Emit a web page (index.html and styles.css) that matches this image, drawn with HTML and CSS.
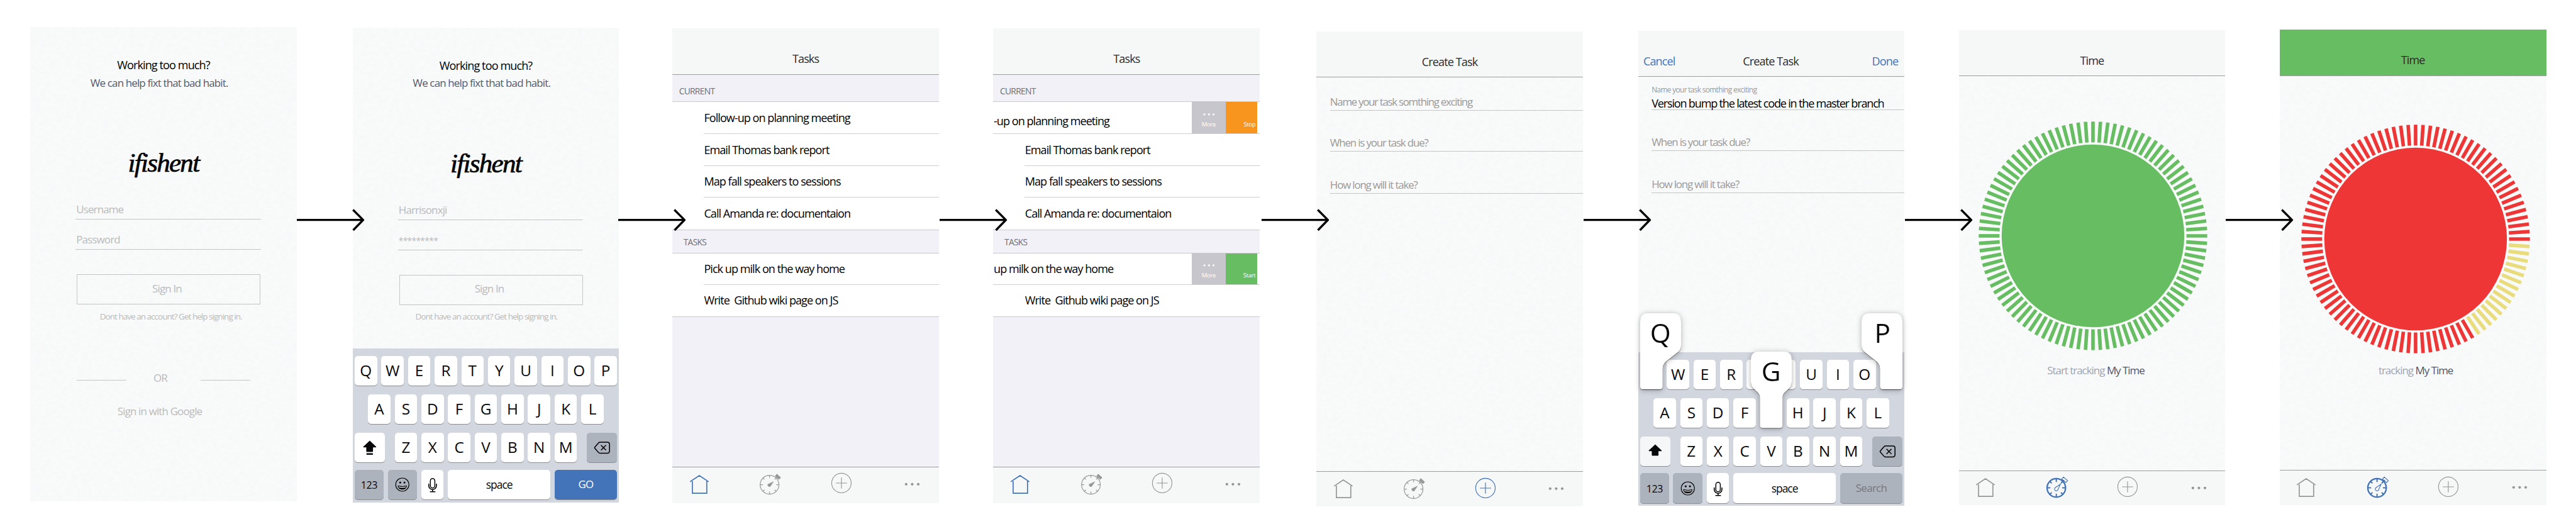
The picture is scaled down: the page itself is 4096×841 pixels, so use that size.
FILE: index.html
```html
<!DOCTYPE html>
<html lang="en">
<head>
<meta charset="utf-8">
<title>ifishent – screen flow</title>
<link rel="stylesheet" href="styles.css">
</head>
<body>
<svg class="defs" aria-hidden="true">
  <defs>
    <symbol id="arrow" viewBox="0 0 190 66"><path d="M0 33H184M158 4.500L186.500 33L158.500 62" fill="none" stroke="#000" stroke-width="6"/></symbol>
    <symbol id="home" viewBox="0 0 60 60"><path d="M4 27.500L30 10L56 27.500M10.500 26V60H51V26" fill="none" stroke="currentColor" stroke-width="3" transform="translate(0 -3)"/></symbol>
    <symbol id="clock" viewBox="0 0 72 72">
      <circle cx="33" cy="40" r="26.500" fill="none" stroke="currentColor" stroke-width="2"/>
      <path d="M33 14v7M33 59v7M7 40h7M52 40h7M14.600 21.600l4 4M47.400 54.400l4 4M14.600 58.400l4-4M47.400 25.600l6-6" stroke="currentColor" stroke-width="2" fill="none"/>
      <path d="M44 31.500L28 39a5 5 0 0 0 7 6Z" fill="currentColor" stroke="currentColor"/>
      <path d="M53.400 9.500L65 20L59.500 25.500L48.300 15.500Z" fill="currentColor"/>
    </symbol>
    <symbol id="clock-on" viewBox="0 0 72 72">
      <circle cx="33" cy="40" r="26" fill="none" stroke="currentColor" stroke-width="4"/>
      <path d="M33 15v7M33 58v7M8 40h7M51 40h7M15 22l4 4M47 54l4 4M15 58l4-4M47 26l7-7" stroke="currentColor" stroke-width="3.500" stroke-linecap="round" fill="none"/>
      <path d="M44.500 29.500L30 39.500a5 5 0 1 0 8 4.500Z" fill="none" stroke="currentColor" stroke-width="2"/>
      <path d="M53.400 9.500L65 20L59.500 25L48.300 15.500Z" fill="none" stroke="currentColor" stroke-width="2"/>
    </symbol>
    <symbol id="plus" viewBox="0 0 60 60"><circle cx="30" cy="30" r="27.500" fill="none" stroke="currentColor" stroke-width="2"/><path d="M30 14.500v31M14.500 30h31" stroke="currentColor" stroke-width="2"/></symbol>
    <symbol id="dots" viewBox="0 0 44 10"><circle cx="5" cy="5" r="3.800" fill="currentColor"/><circle cx="22" cy="5" r="3.800" fill="currentColor"/><circle cx="39" cy="5" r="3.800" fill="currentColor"/></symbol>
    <symbol id="shift" viewBox="0 0 84 84"><path d="M42.300 22.300L60.500 39.500Q61 41 59 41H51.500V52Q51.500 54 49.500 54H34.600Q32.600 54 32.600 52V41H25.500Q23.500 41 24 39.500Z" fill="#07080a"/></symbol>
    <symbol id="caps" viewBox="0 0 84 84"><use href="#shift"/><rect x="33" y="57.600" width="18.500" height="4.400" rx="1.500" fill="#07080a"/></symbol>
    <symbol id="delete" viewBox="0 0 84 84"><path d="M37 26.700H58Q64 26.700 64 32.700V51.500Q64 57.500 58 57.500H37Q34.500 57.500 33 55.500L22.500 43.500Q21.500 42 22.500 40.500L33 28.700Q34.500 26.700 37 26.700ZM40 35L54 49M54 35L40 49" fill="none" stroke="#000" stroke-width="2.700"/></symbol>
    <symbol id="smile" viewBox="0 0 84 84"><circle cx="42" cy="41.500" r="18.600" fill="none" stroke="#000" stroke-width="2"/><circle cx="36" cy="36" r="2.600"/><circle cx="48" cy="36" r="2.600"/><path d="M29 44Q42 48 55 44Q53.500 55.500 42 55.500Q30.500 55.500 29 44Z"/><path d="M31.500 46.500Q42 49.500 52.500 46.500L51.500 49Q42 51.500 32.500 49Z" fill="#fff"/></symbol>
    <symbol id="mic" viewBox="0 0 63 84"><rect x="25.300" y="24.500" width="12.600" height="26.500" rx="6.300" fill="none" stroke="#000" stroke-width="2.600"/><path d="M20.800 39V44.500A10.800 10.800 0 0 0 42.400 44.500V39M31.600 55.500V61M24 61.500H39.500" fill="none" stroke="#000" stroke-width="2.800"/></symbol>
    <g id="t1"><rect x="263" y="-5" width="58.500" height="10"/></g>
    <g id="t3"><use href="#t1"/><use href="#t1" transform="rotate(3.750)"/><use href="#t1" transform="rotate(7.500)"/></g>
    <g id="t9"><use href="#t3"/><use href="#t3" transform="rotate(11.250)"/><use href="#t3" transform="rotate(22.500)"/></g>
    <g id="done-ticks"><use href="#t9" transform="rotate(3.750)"/><use href="#t3" transform="rotate(37.500)"/><use href="#t3" transform="rotate(48.750)"/></g>
    <g id="main-ticks"><use href="#t9" transform="rotate(60)"/><use href="#t9" transform="rotate(93.750)"/><use href="#t9" transform="rotate(127.500)"/><use href="#t9" transform="rotate(161.250)"/><use href="#t9" transform="rotate(195)"/><use href="#t9" transform="rotate(228.750)"/><use href="#t9" transform="rotate(262.500)"/><use href="#t9" transform="rotate(296.250)"/><use href="#t9" transform="rotate(330)"/></g>
  </defs>
</svg>

<main class="board">
  <section class="phone phone-1 paper login">
    <h1 class="headline">Working too much?</h1>
    <p class="tagline">We can help fixt that bad habit.</p>
    <div class="logo">ifishent</div>
    <div class="field"><span>Username</span></div>
    <div class="field"><span>Password</span></div>
    <div class="button"><span>Sign In</span></div>
    <p class="help"><span>Dont have an account? Get help signing in.</span></p>
    <div class="divider"><i></i><span>OR</span><i></i></div>
    <p class="google"><span>Sign in with Google</span></p>
  </section>
  <svg class="arrow arrow-1"><use href="#arrow"/></svg>

  <section class="phone phone-2 paper login">
    <h1 class="headline">Working too much?</h1>
    <p class="tagline">We can help fixt that bad habit.</p>
    <div class="logo">ifishent</div>
    <div class="field"><span>Harrisonxji</span></div>
    <div class="field"><span class="stars">*********</span></div>
    <div class="button"><span>Sign In</span></div>
    <p class="help help-left"><span>Dont have an account? Get help signing in.</span></p>
    <div class="kb">
      <div class="keys"><b>Q</b><b>W</b><b>E</b><b>R</b><b>T</b><b>Y</b><b>U</b><b>I</b><b>O</b><b>P</b></div>
      <div class="keys"><b>A</b><b>S</b><b>D</b><b>F</b><b>G</b><b>H</b><b>J</b><b>K</b><b>L</b></div>
      <div class="keys"><b class="k-side k-left"><svg><use href="#caps"/></svg></b><b>Z</b><b>X</b><b>C</b><b>V</b><b>B</b><b>N</b><b>M</b><b class="k-side k-right k-dark"><svg><use href="#delete"/></svg></b></div>
      <div class="keys keys-last"><b class="k-num k-dark">123</b><b class="k-face k-dark"><svg><use href="#smile"/></svg></b><b class="k-mic"><svg><use href="#mic"/></svg></b><b class="k-space">space</b><b class="k-go">GO</b></div>
    </div>
  </section>
  <svg class="arrow arrow-2"><use href="#arrow"/></svg>

  <section class="phone phone-3 list">
    <header class="bar"><h2>Tasks</h2></header>
    <h3 class="group">CURRENT</h3>
    <ul>
      <li><span>Follow-up on planning meeting</span></li>
      <li><span>Email Thomas bank report</span></li>
      <li><span>Map fall speakers to sessions</span></li>
      <li><span>Call Amanda re: documentaion</span></li>
    </ul>
    <h3 class="group group-tasks">TASKS</h3>
    <ul>
      <li><span>Pick up milk on the way home</span></li>
      <li><span>Write&nbsp; Github wiki page on JS</span></li>
    </ul>
    <nav class="tabs"><svg class="i-home on"><use href="#home"/></svg><svg class="i-clock"><use href="#clock"/></svg><svg class="i-plus"><use href="#plus"/></svg><svg class="i-dots"><use href="#dots"/></svg></nav>
  </section>
  <svg class="arrow arrow-3"><use href="#arrow"/></svg>

  <section class="phone phone-4 list">
    <header class="bar"><h2>Tasks</h2></header>
    <h3 class="group">CURRENT</h3>
    <ul>
      <li class="swiped swiped-low"><span>-up on planning meeting</span><div class="more"><svg><use href="#dots"/></svg><em>More</em></div><div class="act stop"><em>Stop</em></div></li>
      <li><span>Email Thomas bank report</span></li>
      <li><span>Map fall speakers to sessions</span></li>
      <li><span>Call Amanda re: documentaion</span></li>
    </ul>
    <h3 class="group group-tasks">TASKS</h3>
    <ul>
      <li class="swiped"><span>up milk on the way home</span><div class="more"><svg><use href="#dots"/></svg><em>More</em></div><div class="act start"><em>Start</em></div></li>
      <li><span>Write&nbsp; Github wiki page on JS</span></li>
    </ul>
    <nav class="tabs"><svg class="i-home on"><use href="#home"/></svg><svg class="i-clock"><use href="#clock"/></svg><svg class="i-plus"><use href="#plus"/></svg><svg class="i-dots"><use href="#dots"/></svg></nav>
  </section>
  <svg class="arrow arrow-4"><use href="#arrow"/></svg>

  <section class="phone phone-5 paper">
    <header class="bar"><h2>Create Task</h2></header>
    <div class="entry entry-1"><span class="wide">Name your task somthing exciting</span></div>
    <div class="entry entry-2"><span>When is your task due?</span></div>
    <div class="entry entry-3"><span>How long will it take?</span></div>
    <nav class="tabs"><svg class="i-home"><use href="#home"/></svg><svg class="i-clock"><use href="#clock"/></svg><svg class="i-plus on"><use href="#plus"/></svg><svg class="i-dots"><use href="#dots"/></svg></nav>
  </section>
  <svg class="arrow arrow-5"><use href="#arrow"/></svg>

  <section class="phone phone-6 paper">
    <header class="bar bar-actions"><a>Cancel</a><h2>Create Task</h2><a>Done</a></header>
    <div class="entry entry-1 filled"><small>Name your task somthing exciting</small><strong>Version bump the latest code in the master branch</strong></div>
    <div class="entry entry-2"><span>When is your task due?</span></div>
    <div class="entry entry-3"><span>How long will it take?</span></div>
    <div class="kb">
      <div class="keys"><b></b><b>W</b><b>E</b><b>R</b><b></b><b></b><b>U</b><b>I</b><b>O</b><b></b></div>
      <div class="keys"><b>A</b><b>S</b><b>D</b><b>F</b><b></b><b>H</b><b>J</b><b>K</b><b>L</b></div>
      <div class="keys"><b class="k-side k-left k-pale"><svg><use href="#shift"/></svg></b><b>Z</b><b>X</b><b>C</b><b>V</b><b>B</b><b>N</b><b>M</b><b class="k-side k-right k-dark"><svg><use href="#delete"/></svg></b></div>
      <div class="keys keys-last"><b class="k-num k-dark">123</b><b class="k-face k-dark"><svg><use href="#smile"/></svg></b><b class="k-mic"><svg><use href="#mic"/></svg></b><b class="k-space">space</b><b class="k-go k-search">Search</b></div>
      <svg class="pop pop-q" viewBox="0 0 115 215"><path d="M22 0H92Q115 0 115 24V91Q115 100 110 106L71 137Q63 146 63 156V206Q63 214 55 214H8Q0 214 0 206V24Q0 0 22 0Z"/><text x="57" y="83.500">Q</text></svg>
      <svg class="pop pop-g" viewBox="0 0 115 215"><path d="M22 0H93Q115 0 115 24V84Q115 95 109 102L95 115Q89 121 89 130V207Q89 215 81 215H33.500Q25.500 215 25.500 207V130Q25.500 121 19.500 115L6 102Q0 95 0 84V24Q0 0 22 0Z"/><text x="57" y="83.500">G</text></svg>
      <svg class="pop pop-p" viewBox="0 0 115 215"><path d="M93 0H23Q0 0 0 24V91Q0 100 5 106L44 137Q52 146 52 156V206Q52 214 60 214H107Q115 214 115 206V24Q115 0 93 0Z"/><text x="59" y="83.500">P</text></svg>
    </div>
  </section>
  <svg class="arrow arrow-6"><use href="#arrow"/></svg>

  <section class="phone phone-7 paper">
    <header class="bar"><h2>Time</h2></header>
    <svg class="dial green" viewBox="-322 -322 644 644"><use href="#main-ticks"/><use href="#done-ticks"/><circle r="257"/></svg>
    <p class="track"><span>Start tracking</span> <strong>My Time</strong></p>
    <nav class="tabs"><svg class="i-home"><use href="#home"/></svg><svg class="i-clock on"><use href="#clock-on"/></svg><svg class="i-plus"><use href="#plus"/></svg><svg class="i-dots"><use href="#dots"/></svg></nav>
  </section>
  <svg class="arrow arrow-7"><use href="#arrow"/></svg>

  <section class="phone phone-8 paper">
    <header class="bar bar-green"><h2>Time</h2></header>
    <svg class="dial red" viewBox="-322 -322 644 644"><use href="#main-ticks"/><use class="yellow" href="#done-ticks"/><circle r="257"/></svg>
    <p class="track"><span>tracking</span> <strong>My Time</strong></p>
    <nav class="tabs"><svg class="i-home"><use href="#home"/></svg><svg class="i-clock on"><use href="#clock-on"/></svg><svg class="i-plus"><use href="#plus"/></svg><svg class="i-dots"><use href="#dots"/></svg></nav>
  </section>
</main>
</body>
</html>
```
FILE: styles.css
```css
/* 1rem = 100 design pixels; each phone is 750 design pixels wide */
html { font-size: 56.512px; }
* { box-sizing: border-box; margin: 0; padding: 0; }
body {
  background: #fff;
  color: #000;
  font-family: "Open Sans", "Noto Sans", sans-serif;
  font-size: .32rem;
  line-height: .4rem;
  overflow: hidden;
}
svg { display: block; overflow: visible; }
.defs { position: absolute; width: 0; height: 0; }
h1, h2, h3, b, em, strong { font-weight: 400; font-style: normal; font-size: inherit; }
ul { list-style: none; }
span, h1, h2, h3, p, a, strong, small { white-space: nowrap; letter-spacing: -.05em; }

.board { display: flex; align-items: flex-start; width: 72.48rem; height: 14.88rem; padding-left: .85rem; }
.phone { flex: none; display: flex; flex-direction: column; width: 7.5rem; height: 13.35rem; }
.phone-1 { margin-top: .765rem; height: 13.34rem; }
.phone-2 { margin-top: .78rem; }
.phone-3, .phone-4 { margin-top: .8rem; }
.phone-5 { margin-top: .88rem; height: 13.36rem; }
.phone-6 { margin-top: .865rem; height: 13.37rem; }
.phone-7 { margin-top: .85rem; height: 13.365rem; }
.phone-8 { margin-top: .84rem; height: 13.365rem; }
.paper {
  background: #f9fafa url("data:image/svg+xml,%3Csvg xmlns='http://www.w3.org/2000/svg' width='200' height='200'%3E%3Cfilter id='n'%3E%3CfeTurbulence type='fractalNoise' baseFrequency='.12 .16' numOctaves='3' stitchTiles='stitch'/%3E%3CfeColorMatrix values='0 0 0 0 .92 0 0 0 0 .93 0 0 0 0 .94 1.800 0 0 0 -.65'/%3E%3C/filter%3E%3Crect width='200' height='200' filter='url(%23n)'/%3E%3C/svg%3E");
}

.arrow { flex: none; width: 1.9rem; height: .66rem; margin-top: 5.855rem; z-index: 2; }
.arrow-1 { margin-right: -.33rem; }
.arrow-2 { margin-left: -.02rem; margin-right: -.38rem; }
.arrow-3 { margin-left: .01rem; margin-right: -.38rem; }
.arrow-4 { margin-left: .05rem; margin-right: -.36rem; }
.arrow-5 { margin-left: .025rem; margin-right: -.375rem; }
.arrow-6 { margin-left: .02rem; margin-right: -.395rem; }
.arrow-7 { margin-left: .015rem; margin-right: -.385rem; }

/* login */
.headline { padding-top: .87rem; text-align: center; font-weight: 500; }
.tagline { margin-top: .1rem; padding-right: .24rem; text-align: center; font-size: .3rem; color: #51596f; }
.logo { margin-top: 1.65rem; height: .8rem; line-height: .8rem; text-align: center; font-family: "Liberation Serif", serif; font-style: italic; font-size: .76rem; letter-spacing: -.03rem; -webkit-text-stroke: .012rem #000; }
.field { width: 5.21rem; height: .48rem; margin: .375rem 0 0 1.275rem; padding-left: .02rem; border-bottom: 1px solid #c3c6c5; font-size: .3rem; color: #b9bbbb; }
.logo + .field { margin-top: .71rem; }
.stars { font-size: .245rem; }
.button { display: flex; align-items: center; justify-content: center; width: 5.175rem; height: .85rem; margin: .68rem 0 0 1.31rem; padding: 0 .1rem .03rem 0; border: 1px solid #c3c6c5; font-size: .3rem; color: #b9bbbb; }
.help { margin: .145rem 0 0 1.96rem; font-size: .238rem; color: #b9bbbb; }
.help span { letter-spacing: -.07em; }
.help-left { margin: .125rem 0 0 1.77rem; }
.divider { display: flex; align-items: center; justify-content: space-between; width: 4.88rem; margin: 1.34rem 0 0 1.31rem; font-size: .3rem; color: #b9bbbb; }
.divider i { width: 1.39rem; height: 1px; margin-top: .1rem; background: #c3c6c5; }
.divider span { margin-right: .18rem; }
.google { margin-top: .535rem; padding-right: .21rem; text-align: center; font-size: .3rem; color: #b9bbbb; }

/* keyboard */
.kb { position: relative; height: 4.32rem; margin-top: auto; padding-top: .2rem; background: #d2d6de; }
.keys { display: flex; justify-content: center; gap: .12rem; height: .84rem; margin-bottom: .24rem; }
.keys b { display: flex; align-items: center; justify-content: center; width: .63rem; height: .84rem; padding-top: .01rem; border-radius: .09rem; background: #fff; box-shadow: 0 .018rem 0 #8b8d92; color: #07080a; font-size: .43rem; }
.keys svg { width: .84rem; height: .84rem; flex: none; }
.keys-last { margin-top: -.04rem; }
.keys .k-side { width: .84rem; }
.keys .k-left { margin-right: .16rem; }
.keys .k-right { margin-left: .16rem; }
.keys .k-dark { background: #adb3bd; }
.keys .k-pale { background: #f5f6f8; }
.keys .k-num { width: .81rem; font-size: .285rem; padding-top: .05rem; letter-spacing: -.03em; }
.keys .k-face { width: .82rem; }
.keys .k-mic svg { width: .63rem; }
.keys .k-space { width: 2.89rem; font-size: .31rem; letter-spacing: -.06em; }
.keys .k-go { width: 1.75rem; font-size: .3rem; letter-spacing: -.04em; background: #4374ba; color: #fff; }
.keys .k-search { background: #adb3bd; color: #74777c; }
.pop { position: absolute; width: 1.15rem; height: 2.15rem; filter: drop-shadow(0 .02rem .01rem rgba(0,0,0,.45)) drop-shadow(0 .02rem .08rem rgba(0,0,0,.3)); }
.pop path { fill: #fff; }
.pop text { font-size: 75px; text-anchor: middle; fill: #07080a; }
.pop-q { left: .06rem; top: -1.1rem; }
.pop-g { left: 3.18rem; top: -.02rem; }
.pop-p { left: 6.29rem; top: -1.1rem; }

/* title bar and tab bar */
.bar { flex: none; height: 1.3rem; padding-top: .655rem; border-bottom: 1px solid #9c9e9e; background: #f6f8f7; text-align: center; color: #2b2b2d; }
.bar-actions { display: grid; grid-template-columns: 1fr auto 1fr; padding: .66rem .18rem 0 .15rem; }
.bar-actions a { color: #4173b9; text-align: left; }
.bar-actions a:last-child { text-align: right; }
.bar-green { background: #67be62; }
.tabs { display: grid; grid-template-columns: repeat(4, 2rem); justify-content: center; justify-items: center; height: 1.02rem; margin-top: auto; border-top: 1px solid #9c9e9e; background: #f6f7f7; color: #969696; }
.phone-5 .tabs, .phone-7 .tabs, .phone-8 .tabs { height: .985rem; }
.on { color: #4173b9; }
.i-home { width: .6rem; height: .6rem; margin-top: .155rem; }
.i-clock { width: .72rem; height: .72rem; margin: .085rem 0 0 .04rem; }
.i-plus { width: .6rem; height: .6rem; margin-top: .15rem; }
.i-dots { width: .44rem; height: .1rem; margin-top: .43rem; }

/* task lists */
.list { background: #f2f1f7; }
.group { height: .775rem; padding: .275rem 0 0 .185rem; border-bottom: 1px solid #c8c7cc; font-size: .245rem; color: #6d6d72; }
.group-tasks { height: .66rem; padding: .145rem 0 0 .31rem; }
.list ul { background: #fff; border-bottom: 1px solid #c8c7cc; }
.list li { display: flex; align-items: center; height: .895rem; margin-left: .88rem; border-bottom: 1px solid #cfcfd2; font-weight: 500; }
.list li:last-child { border-bottom: 0; }
.group-tasks + ul li { height: .882rem; }
.list li > span { padding: 0 0 0 .01rem; letter-spacing: -.054em; }
.list .swiped { margin-left: 0; padding-right: .075rem; }
.swiped > span { flex: 1; }
.list .swiped-low > span { padding-top: .19rem; }
.swiped em { font-size: .17rem; line-height: .2rem; color: #fff; font-weight: 400; letter-spacing: -.04em; }
.more { display: flex; flex-direction: column; align-items: center; gap: .13rem; width: .96rem; height: 100%; padding-top: .29rem; background: #c7c6cc; color: #fff; }
.more svg { width: .33rem; height: .1rem; }
.act { display: flex; justify-content: flex-end; width: .885rem; height: 100%; padding: .52rem .05rem 0 0; }
.stop { background: #f8951f; }
.start { background: #67be62; }

/* create task */
.entry { margin-left: .385rem; border-bottom: 1px solid #c3c6c5; font-size: .3rem; color: #999; }
.entry span { display: block; letter-spacing: -.07em; }
.entry .wide { letter-spacing: -.078em; }
.entry-1 { height: .94rem; padding-top: .49rem; }
.entry-2 { height: 1.15rem; padding-top: .7rem; }
.entry-3 { height: 1.18rem; padding-top: .74rem; }
.filled { display: flex; flex-direction: column; padding-top: .2rem; }
.filled small { font-size: .21rem; line-height: .3rem; letter-spacing: -.055em; }
.filled strong { margin-top: .04rem; font-size: .32rem; font-weight: 500; color: #000; letter-spacing: -.066em; }

/* timer */
.dial { flex: none; width: 6.44rem; height: 6.44rem; margin: 1.27rem 0 0 .555rem; }
.green { fill: #67be62; }
.red { margin: 1.37rem 0 0 .6rem; fill: #ee3636; }
.yellow { fill: #e9dc7d; }
.track { margin: .375rem 0 0 2.49rem; font-size: .3rem; color: #9ea3b0; }
.track span { letter-spacing: -.06em; }
.red + .track { margin: .275rem 0 0 2.78rem; }
.track strong { color: #50566a; font-weight: 500; letter-spacing: -.06em; }
```
